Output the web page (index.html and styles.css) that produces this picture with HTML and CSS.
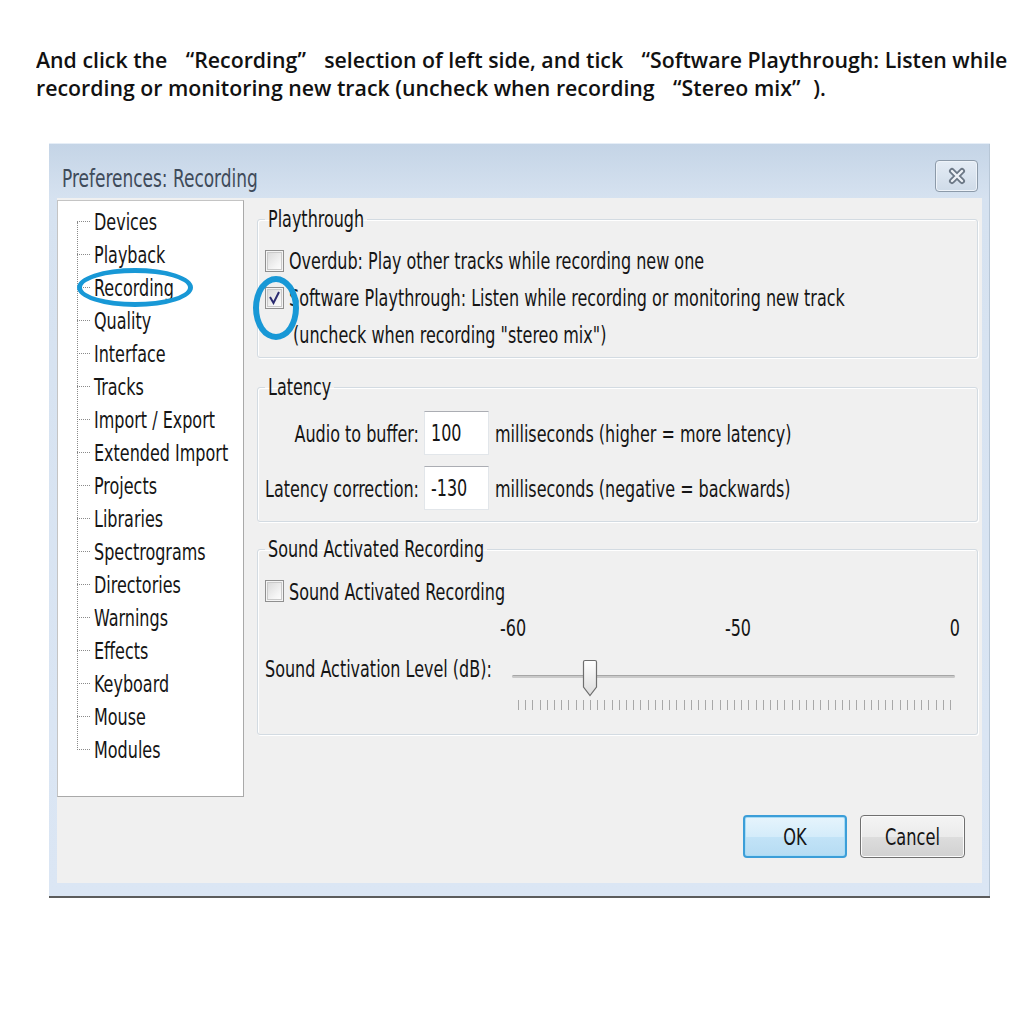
FILE: index.html
```html
<!DOCTYPE html>
<html lang="en">
<head>
<meta charset="utf-8">
<title>Preferences: Recording</title>
<link rel="stylesheet" href="styles.css">
</head>
<body>
<div class="instr">
  <p class="iline"><span class="it">And click the <span class="ql">“</span>Recording<span class="qr">”</span> selection of left side, and tick <span class="ql">“</span>Software Playthrough: Listen while</span></p>
  <p class="iline"><span class="it">recording or monitoring new track (uncheck when recording <span class="ql">“</span>Stereo mix<span class="qr">”</span>).</span></p>
</div>

<div class="dialog">
  <div class="titlebar">
    <span class="title tx">Preferences: Recording</span>
    <span class="close">
      <svg width="20" height="20" viewBox="0 0 20 20">
        <path d="M5 5 L15 15 M15 5 L5 15" stroke="#6c7886" stroke-width="6" stroke-linecap="round" fill="none"/>
        <path d="M5 5 L15 15 M15 5 L5 15" stroke="#eef2f7" stroke-width="2.4" stroke-linecap="round" fill="none"/>
      </svg>
    </span>
  </div>

  <div class="content">
    <div class="tree">
      <ul class="tree-list">
        <li><span class="tx">Devices</span></li>
        <li><span class="tx">Playback</span></li>
        <li class="sel"><span class="tx">Recording</span><span class="ring ring-tree"></span></li>
        <li><span class="tx">Quality</span></li>
        <li><span class="tx">Interface</span></li>
        <li><span class="tx">Tracks</span></li>
        <li><span class="tx">Import / Export</span></li>
        <li><span class="tx">Extended Import</span></li>
        <li><span class="tx">Projects</span></li>
        <li><span class="tx">Libraries</span></li>
        <li><span class="tx">Spectrograms</span></li>
        <li><span class="tx">Directories</span></li>
        <li><span class="tx">Warnings</span></li>
        <li><span class="tx">Effects</span></li>
        <li><span class="tx">Keyboard</span></li>
        <li><span class="tx">Mouse</span></li>
        <li><span class="tx">Modules</span></li>
      </ul>
    </div>

    <div class="panels">
      <fieldset class="group g1">
        <legend><span class="tx">Playthrough</span></legend>
        <div class="check-row">
          <span class="cb"></span>
          <span class="tx">Overdub: Play other tracks while recording new one</span>
        </div>
        <div class="check-row">
          <span class="cb checked">
            <svg width="19" height="22" viewBox="0 0 19 22"><polyline points="5,10 8.5,16 14,5" fill="none" stroke="#2b2b70" stroke-width="2"/></svg>
            <span class="ring ring-cb"></span>
          </span>
          <span class="tx">Software Playthrough: Listen while recording or monitoring new track</span>
        </div>
        <div class="cont-row"><span class="tx">(uncheck when recording "stereo mix")</span></div>
      </fieldset>

      <fieldset class="group g2">
        <legend><span class="tx">Latency</span></legend>
        <div class="lat-grid">
          <span class="lat-label tx">Audio to buffer:</span>
          <span class="field"><span class="tx">100</span></span>
          <span class="lat-unit tx">milliseconds (higher = more latency)</span>
          <span class="lat-label tx">Latency correction:</span>
          <span class="field"><span class="tx">-130</span></span>
          <span class="lat-unit tx">milliseconds (negative = backwards)</span>
        </div>
      </fieldset>

      <fieldset class="group g3">
        <legend><span class="tx">Sound Activated Recording</span></legend>
        <div class="check-row">
          <span class="cb"></span>
          <span class="tx">Sound Activated Recording</span>
        </div>
        <div class="scale-row">
          <span class="tx">-60</span>
          <span class="tx">-50</span>
          <span class="tx">0</span>
        </div>
        <div class="slider-row">
          <span class="slider-label tx">Sound Activation Level (dB):</span>
          <div class="slider">
            <div class="track"></div>
            <div class="ticks"></div>
            <svg class="thumb" width="16" height="38" viewBox="0 0 16 38">
              <defs>
                <linearGradient id="tg" x1="0" y1="0" x2="0" y2="1">
                  <stop offset="0" stop-color="#ffffff"/>
                  <stop offset="1" stop-color="#dcdcdc"/>
                </linearGradient>
              </defs>
              <path d="M3 1.5 H13 Q14.5 1.5 14.5 3 V28 L8 36.5 L1.5 28 V3 Q1.5 1.5 3 1.5 Z" fill="url(#tg)" stroke="#6e6e6e" stroke-width="1.2"/>
            </svg>
          </div>
        </div>
      </fieldset>
    </div>

    <div class="footer">
      <span class="btn btn-ok"><span class="tx">OK</span></span>
      <span class="btn"><span class="tx">Cancel</span></span>
    </div>
  </div>
</div>
</body>
</html>
```

FILE: styles.css
```css
* { box-sizing: border-box; }
html, body { margin: 0; padding: 0; background: #ffffff; }
body {
  width: 1020px;
  height: 1020px;
  overflow: hidden;
  font-family: "DejaVu Sans Condensed", "DejaVu Sans", sans-serif;
  font-stretch: condensed;
  color: #151515;
}

.tx {
  display: inline-block;
  white-space: nowrap;
  transform: scaleY(1.3);
  transform-origin: 50% 52%;
}

/* instruction text */
.instr {
  height: 143px;
  padding: 46px 0 0 36px;
  font-family: "Open Sans", "Noto Sans", sans-serif;
  font-stretch: normal;
  font-weight: 600;
  font-size: 21.3px;
  color: #111;
}
.iline { margin: 0; height: 28px; line-height: 28px; white-space: nowrap; }
.it { display: inline-block; transform: scaleY(1.05); }
.ql, .qr { display: inline-block; width: 1em; }
.ql { text-align: right; }
.qr { text-align: left; }

/* dialog */
.dialog {
  margin-left: 49px;
  width: 941px;
  height: 755px;
  padding: 0 8px 13px 8px;
  display: flex;
  flex-direction: column;
  background: linear-gradient(#c4d4e6, #d6e2f0 56px, #dbe6f4);
  border-bottom: 2px solid #5c5c5c;
  box-shadow: inset 0 1px 0 #e6eef7, inset -1px 0 0 #b7c6d6;
}
.titlebar {
  height: 55px;
  display: flex;
  justify-content: space-between;
  align-items: flex-start;
  padding: 17px 4px 0 5px;
}
.title {
  margin-top: 4px;
  line-height: 28px;
  font-size: 18.9px;
  color: #3f4b5a;
}
.close {
  width: 43px;
  height: 32px;
  display: flex;
  align-items: center;
  justify-content: center;
  border: 1px solid #8c9aa9;
  border-radius: 4px;
  background: linear-gradient(#e4ecf5, #cfdbe8);
  box-shadow: inset 0 0 0 1px #eef3f9;
}

.content {
  flex: 1;
  background: #f0f0f0;
  display: grid;
  grid-template-columns: 187px 1fr;
  column-gap: 13px;
  row-gap: 18px;
  align-content: start;
  padding: 2px 4px 0 0;
  font-size: 17.8px;
}

/* tree */
.tree {
  height: 597px;
  background: #ffffff;
  border: 1px solid #a9a9a9;
  border-top-color: #c4c4c4;
  border-left-color: #c4c4c4;
}
.tree-list {
  list-style: none;
  margin: 0;
  padding: 4px 0 0 19px;
  position: relative;
}
.tree-list::before {
  content: "";
  position: absolute;
  left: 19px;
  top: 20.5px;
  height: 528px;
  border-left: 1px dotted #8a8a8a;
}
.tree-list li {
  position: relative;
  height: 33px;
  line-height: 33px;
  padding-left: 17px;
}
.tree-list li::before {
  content: "";
  position: absolute;
  left: 0;
  top: 16px;
  width: 13px;
  border-top: 1px dotted #8a8a8a;
}

/* annotation rings */
.ring {
  position: absolute;
  border: 5px solid #1898d6;
  border-radius: 50%;
  z-index: 2;
  pointer-events: none;
}
.ring-tree { left: 0; top: -3px; width: 116px; height: 39px; border-width: 5.5px; }
.ring-cb { left: -13px; top: -12px; width: 46px; height: 64px; border-width: 6px; }

/* right panels */
.panels { padding-top: 7px; }
.group {
  margin: 0;
  min-width: 0;
  border: 1px solid #d3dbe2;
  border-radius: 3px;
  box-shadow: inset 1px 1px 0 #ffffff, 1px 1px 0 #ffffff;
}
.group legend {
  padding: 0 3px;
  height: 24px;
  line-height: 24px;
}
.g1 { padding: 11px 8px 4px 7px; }
.g2 { margin-top: 17px; padding: 12px 8px 11px 7px; }
.g3 { margin-top: 15px; padding: 11.5px 8px 22px 7px; }

.check-row {
  height: 37px;
  display: flex;
  align-items: center;
  gap: 5px;
}
.cb {
  position: relative;
  flex: none;
  width: 19px;
  height: 22px;
  border: 1px solid #8f8f8f;
  background: linear-gradient(135deg, #d6d6d6, #f6f6f6 70%, #ffffff);
  box-shadow: inset 0 0 0 1px #f4f4f4, inset 0 0 0 2px #c9c9c9;
}
.cb svg { position: absolute; left: -1px; top: -1px; }
.cont-row {
  height: 37px;
  line-height: 37px;
  padding-left: 28px;
}

.lat-grid {
  display: grid;
  grid-template-columns: auto 65px auto;
  justify-content: start;
  grid-auto-rows: 44px;
  column-gap: 5px;
  row-gap: 11px;
  align-items: center;
}
.lat-label { justify-self: end; }
.lat-unit { margin-left: 1px; }
.field {
  height: 44px;
  background: #ffffff;
  border: 1px solid #e2e6ea;
  border-top-color: #abadb3;
  padding-left: 6px;
  line-height: 42px;
}

.scale-row {
  margin: 6.5px 0 0 235px;
  width: 460px;
  height: 24px;
  line-height: 24px;
  display: flex;
  justify-content: space-between;
}
.slider-row {
  margin-top: 16px;
  height: 56px;
  display: grid;
  grid-template-columns: 247px 443px;
}
.slider-label { line-height: 26px; align-self: start; }
.slider { position: relative; }
.track {
  margin-top: 19px;
  height: 3px;
  border-radius: 2px;
  background: #c9c9c9;
  border-top: 1px solid #a6a6a6;
}
.ticks {
  margin: 22px 0 0 6px;
  width: 433px;
  height: 10px;
  background: repeating-linear-gradient(to right, #a8a8a8 0 1px, transparent 1px 7.2px);
}
.thumb { position: absolute; left: 70px; top: 3px; }

/* buttons */
.footer {
  grid-column: 1 / -1;
  display: flex;
  justify-content: flex-end;
  gap: 13px;
  padding-right: 13px;
}
.btn {
  width: 105px;
  height: 43px;
  display: flex;
  align-items: center;
  justify-content: center;
  border: 1px solid #707070;
  border-radius: 4px;
  background: linear-gradient(#f4f4f4, #ebebeb 50%, #dddddd 51%, #d1d1d1);
  box-shadow: inset 0 0 0 1px #fbfbfb;
  font-size: 18px;
}
.btn-ok {
  width: 104px;
  border: 2px solid #3c9ed8;
  background: linear-gradient(#e6f4fc, #d4ecfa 50%, #c2e3f7 51%, #b6dcf3);
  box-shadow: inset 0 0 0 1px #a8dcf6;
}
```
